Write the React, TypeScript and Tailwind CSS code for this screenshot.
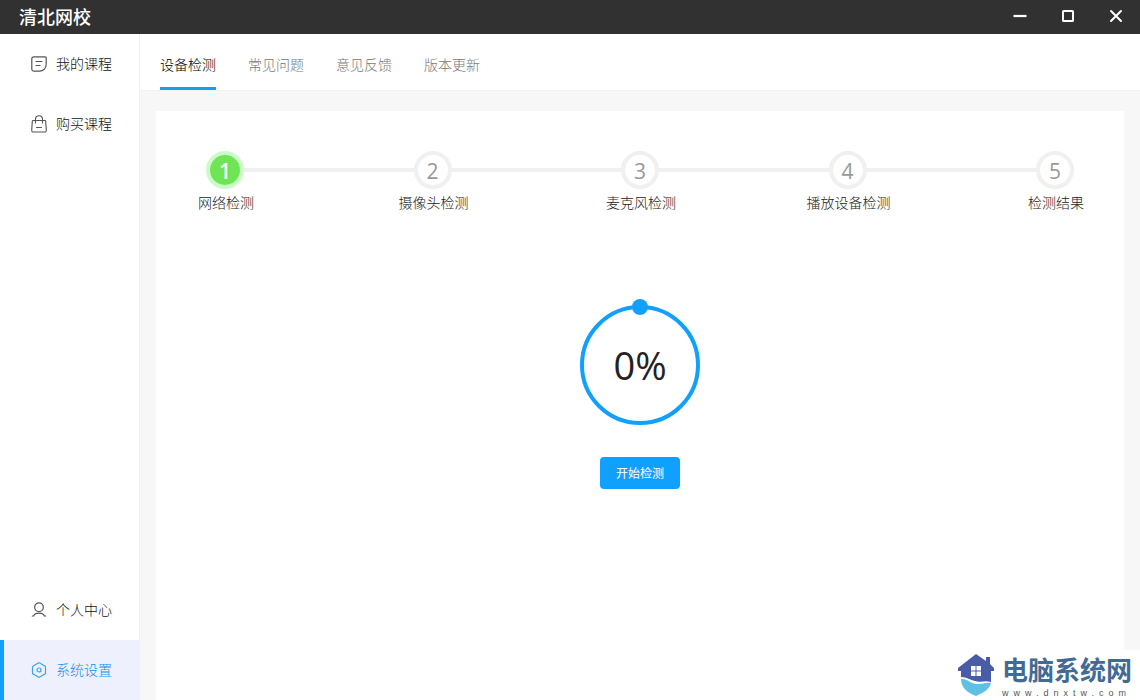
import type { ReactNode } from 'react';
import { clsx } from 'clsx';

const steps = [
  { label: '网络检测', active: true },
  { label: '摄像头检测', active: false },
  { label: '麦克风检测', active: false },
  { label: '播放设备检测', active: false },
  { label: '检测结果', active: false },
];

const tabs = ['设备检测', '常见问题', '意见反馈', '版本更新'];

function LineIcon({ children }: { children: ReactNode }) {
  return (
    <svg
      viewBox="0 0 16 16"
      className="size-4 shrink-0"
      fill="none"
      stroke="currentColor"
      strokeWidth="1.2"
      strokeLinecap="round"
      strokeLinejoin="round"
      aria-hidden="true"
    >
      {children}
    </svg>
  );
}

function CourseIcon() {
  return (
    <LineIcon>
      <path d="M3 .8h11.2a1 1 0 0 1 1 1v6.4c0 4-2.6 7-6.8 7H3a2.2 2.2 0 0 1-2.2-2.2V3A2.2 2.2 0 0 1 3 .8Z" />
      <path d="M5 5.5h6M5 9.5h4" />
    </LineIcon>
  );
}

function BagIcon() {
  return (
    <svg
      viewBox="0 0 16 18"
      className="h-[18px] w-4 shrink-0"
      fill="none"
      stroke="currentColor"
      strokeWidth="1.1"
      strokeLinecap="round"
      aria-hidden="true"
    >
      <path d="M2.2 5.5h11.6c.5 0 .9.4.9.9l.6 9c.1.9-.6 1.600-1.500 1.600H2.200c-.9 0-1.600-.7-1.500-1.600l.6-9c0-.5.400-.9.900-.9Z" />
      <path d="M4.500 8V4.300a3.500 3.500 0 0 1 7 0V8M5.500 12.500h5" />
    </svg>
  );
}

function UserIcon() {
  return (
    <LineIcon>
      <circle cx="8" cy="5.200" r="4.300" />
      <path d="M1.300 14h1.400c.8-2.100 2.600-2.800 5.300-2.800s4.500.7 5.300 2.800h1.400" />
    </LineIcon>
  );
}

function SettingsIcon() {
  return (
    <LineIcon>
      <path d="M7.300 1 2.200 3.900a1.400 1.400 0 0 0-.7 1.200v5.800c0 .5.300 1 .7 1.200L7.300 15c.4.300 1 .3 1.400 0l5.100-2.900c.4-.2.700-.7.700-1.200V5.100c0-.5-.3-1-.7-1.200L8.700 1a1.400 1.400 0 0 0-1.400 0Z" />
      <circle cx="8" cy="8" r="2" />
    </LineIcon>
  );
}

function NavItem({
  icon,
  label,
  active,
}: {
  icon: ReactNode;
  label: string;
  active?: boolean;
}) {
  return (
    <a
      href="#"
      className={clsx(
        'flex h-[60px] items-center gap-[9px] border-l-4 pl-[27px]',
        active
          ? 'border-[#12a0ff] bg-[#eef0fd] text-[#0d8ff2]'
          : 'border-transparent'
      )}
    >
      <span className={active ? 'opacity-80' : 'text-[#555]'}>{icon}</span>
      <span className={clsx('pb-0.5', !active && 'text-[#111]')}>{label}</span>
    </a>
  );
}

function TitleBar() {
  return (
    <header className="flex h-[34px] shrink-0 items-center justify-between bg-[#313131] pl-[19px] text-white">
      <h1 className="pb-0.5 text-lg leading-6 font-medium">清北网校</h1>
      <div className="flex h-full">
        <button aria-label="最小化" className="flex w-12 items-center justify-center pb-0.5">
          <svg viewBox="0 0 14 14" className="size-3.5" stroke="currentColor" strokeWidth="2.200">
            <path d="M.5 7h13" />
          </svg>
        </button>
        <button aria-label="最大化" className="flex w-12 items-center justify-center pb-0.5">
          <svg viewBox="0 0 14 14" className="size-3.5" fill="none" stroke="currentColor" strokeWidth="2">
            <rect x="2" y="2" width="10" height="10" rx=".5" />
          </svg>
        </button>
        <button aria-label="关闭" className="flex w-12 items-center justify-center pb-0.5">
          <svg viewBox="0 0 14 14" className="size-3.5" stroke="currentColor" strokeWidth="2">
            <path d="m2 2 10 10M12 2 2 12" strokeLinecap="round" />
          </svg>
        </button>
      </div>
    </header>
  );
}

function Stepper() {
  return (
    <ol className="flex">
      {steps.map((step, index) => (
        <li
          key={step.label}
          className={clsx('flex items-start', index > 0 && 'flex-1')}
        >
          {index > 0 && <span className="mt-[17px] h-1 flex-1 bg-[#f0f0f0]" />}
          <div className="flex w-[38px] flex-col items-center">
            <span
              className={clsx(
                'flex size-[38px] items-center justify-center rounded-full border-4 pt-0.5 font-["Open_Sans"] text-[21px] leading-6',
                step.active
                  ? 'border-[#cdfbc8] bg-[#6fe556] font-semibold text-white'
                  : 'border-[#f0f0f0] bg-white font-normal text-[#999]'
              )}
            >
              {index + 1}
            </span>
            <span className="mt-[3px] pl-0.5 whitespace-nowrap text-[#222]">{step.label}</span>
          </div>
        </li>
      ))}
    </ol>
  );
}

function Watermark() {
  return (
    <div className="absolute right-0 bottom-0 flex h-[50px] items-center gap-2 bg-white pr-2">
      <svg viewBox="0 0 36 42" className="h-[42px] w-9" aria-hidden="true">
        <path
          d="M18 0 28 7V3h4v7l4 4v3h-3v11c-7-2-10 1-16-1-5-1-8-4-14-4v-6H0v-3Z"
          fill="#4a5ca8"
        />
        <path d="M3 25c6-1 9 5 17 5 5 0 8-2 13-1-1 6-8 10-15 13C10 39 3 34 3 25Z" fill="#5fc0e6" />
        <path d="M13 12h4.500v4.500H13zM18.500 12H23v4.500h-4.500zM13 17.500h4.500V22H13zM18.500 17.500H23V22h-4.500z" fill="#fff" />
      </svg>
      <div>
        <p className="text-[26px] leading-[38px] font-bold text-[#426b94]">电脑系统网</p>
        <p className="pb-0.5 font-['Liberation_Sans'] text-[9px] leading-[10px] tracking-[5px] whitespace-nowrap text-[#555]">
          www.dnxtw.com
        </p>
      </div>
    </div>
  );
}

export default function App() {
  return (
    <div className="relative flex h-screen flex-col overflow-hidden bg-[#f7f7f7] font-['Noto_Sans_CJK_SC',sans-serif] text-sm font-light">
      <TitleBar />
      <div className="flex min-h-0 flex-1">
        <nav className="flex w-[140px] shrink-0 flex-col justify-between border-r border-[#f0f0f0] bg-white">
          <div>
            <NavItem icon={<CourseIcon />} label="我的课程" />
            <NavItem icon={<BagIcon />} label="购买课程" />
          </div>
          <div>
            <NavItem icon={<UserIcon />} label="个人中心" />
            <NavItem icon={<SettingsIcon />} label="系统设置" active />
          </div>
        </nav>

        <main className="flex min-w-0 flex-1 flex-col">
          <div className="flex h-[57px] shrink-0 gap-8 border-b border-[#f2f2f2] bg-white px-5">
            {tabs.map((tab, index) => (
              <button
                key={tab}
                className={clsx(
                  'border-b-[3px] pt-1.5',
                  index === 0
                    ? 'border-[#1a9fe6] text-black'
                    : 'border-transparent text-[#777]'
                )}
              >
                {tab}
              </button>
            ))}
          </div>

          <section className="mx-4 mt-5 flex flex-1 flex-col bg-white px-[50px] pt-10">
            <Stepper />
            <div className="mt-[93px] flex flex-col items-center">
              <div className="relative flex size-[120px] items-center justify-center rounded-full border-4 border-[#12a0ff]">
                <span className="absolute -top-2.5 size-4 rounded-full bg-[#12a0ff]" />
                <span className="font-['Open_Sans'] text-[38px] leading-none font-normal text-[#222]">0%</span>
              </div>
              <button className="mt-8 h-8 w-20 rounded bg-[#12a0ff] text-xs font-normal text-white">
                开始检测
              </button>
            </div>
          </section>
        </main>
      </div>
      <Watermark />
    </div>
  );
}
